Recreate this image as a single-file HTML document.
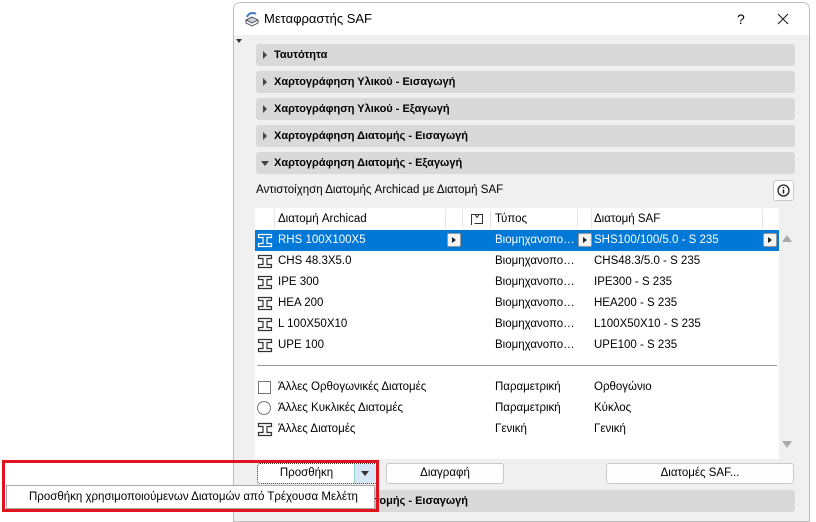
<!DOCTYPE html>
<html><head><meta charset="utf-8"><style>
*{box-sizing:border-box;margin:0;padding:0}
body{width:816px;height:514px;background:#fff;position:relative;overflow:hidden;font-family:"Liberation Sans","DejaVu Sans",sans-serif;font-size:11px;color:#000}
.a{position:absolute}
.dlg{left:233px;top:2px;width:577px;height:520px;background:#f0f0f0;border:1px solid #bdbdbd;border-radius:7px 7px 0 0;overflow:hidden}
.title{left:0;top:0;width:100%;height:32px;background:#fff}
.bar{left:22px;width:539px;height:22px;background:#d9d9d9;border-radius:3px;font-weight:bold;font-size:11px;line-height:22px;padding-left:18px}
.bar:before{content:"";position:absolute;left:7px;top:7px;border-left:4px solid #444;border-top:4px solid transparent;border-bottom:4px solid transparent}
.bar.open:before{left:5px;top:9px;border-top:5px solid #444;border-left:4px solid transparent;border-right:4px solid transparent;border-bottom:0}
.tbl{left:21px;top:205px;width:524px;height:251px;background:#fff;font-size:11.5px}
.row{position:absolute;left:0;width:524px;height:21px;line-height:21px}
.row span{position:absolute}
.sel{background:#0078d7;color:#fff}
.ib{position:absolute;width:14px;height:14px;top:3px;background:#f4f4f4;border:1px solid #999;border-radius:2px}
.ib:after{content:"";position:absolute;left:4px;top:3px;border-left:4px solid #222;border-top:3px solid transparent;border-bottom:3px solid transparent}
.btn{position:absolute;height:21px;background:#fdfdfd;border:1px solid #c8c8c8;border-radius:3px;text-align:center;line-height:19px;font-size:11.5px}
.ibeam{position:absolute;left:2px;top:3px}
</style></head><body>
<svg width="0" height="0" style="position:absolute"><symbol id="ib" viewBox="0 0 16 15"><path d="M1.5 1.5h13v3h-4.5v6h4.5v3h-13v-3h4.5v-6h-4.5z" fill="none" stroke="currentColor" stroke-width="1.2"/></symbol></svg>
<div class="a dlg">
 <div class="a title">
  <svg class="a" style="left:10px;top:8px" width="16" height="16" viewBox="0 0 16 16"><path d="M2 9l6-3 6 3-6 3z" fill="#c9d3df" stroke="#555"/><path d="M2 9v3l6 3 6-3V9" fill="none" stroke="#555"/><path d="M3 6a6 6 0 0 1 9-3" stroke="#3a78c9" stroke-width="2" fill="none"/></svg>
  <span class="a" style="left:30px;top:8px;font-size:13px">Μεταφραστής SAF</span>
  <span class="a" style="left:503px;top:8px;font-size:14px">?</span>
  <svg class="a" style="left:543px;top:10px" width="12" height="12"><path d="M1 1l10 10M11 1L1 11" stroke="#222" stroke-width="1.1"/></svg>
 </div>
 <div class="a" style="left:2px;top:36px;border-top:4px solid #333;border-left:3px solid transparent;border-right:3px solid transparent"></div>
 <div class="a bar" style="top:41px">Ταυτότητα</div>
 <div class="a bar" style="top:68px">Χαρτογράφηση Υλικού - Εισαγωγή</div>
 <div class="a bar" style="top:95px">Χαρτογράφηση Υλικού - Εξαγωγή</div>
 <div class="a bar" style="top:122px">Χαρτογράφηση Διατομής - Εισαγωγή</div>
 <div class="a bar open" style="top:149px">Χαρτογράφηση Διατομής - Εξαγωγή</div>
 <span class="a" style="left:22px;top:181px;font-size:11.5px">Αντιστοίχηση Διατομής Archicad με Διατομή SAF</span>
 <div class="a" style="left:539px;top:177px;width:21px;height:21px;border:1px solid #c8c8c8;border-radius:3px;background:#fdfdfd"><svg width="19" height="19" viewBox="0 0 19 19"><circle cx="9.5" cy="9.5" r="5.5" fill="none" stroke="#222" stroke-width="1.3"/><path d="M9.5 8.5v4M9.5 6v1.2" stroke="#222" stroke-width="1.5"/></svg></div>
 <div class="a tbl">
  <div class="row" style="top:1px;height:20px;line-height:20px">
   <span style="left:19px;top:0;width:1px;height:20px;background:#e5e5e5"></span>
   <span style="left:23px">Διατομή Archicad</span>
   <span style="left:190px;top:0;width:1px;height:20px;background:#e5e5e5"></span>
   <span style="left:207px;top:0;width:1px;height:20px;background:#e5e5e5"></span>
   <svg style="position:absolute;left:215px;top:4px" width="14" height="13"><path d="M1.5 12V1.5h11v9h-8M5 1.5l2 3 2-3" fill="none" stroke="#333"/></svg>
   <span style="left:235px;top:0;width:1px;height:20px;background:#e5e5e5"></span>
   <span style="left:240px">Τύπος</span>
   <span style="left:322px;top:0;width:1px;height:20px;background:#e5e5e5"></span>
   <span style="left:336px;top:0;width:1px;height:20px;background:#e5e5e5"></span>
   <span style="left:339px">Διατομή SAF</span>
   <span style="left:507px;top:0;width:1px;height:20px;background:#e5e5e5"></span>
  </div>
  <div class="row sel" style="top:22px"><svg class="ibeam" width="16" height="15" style="color:#fff"><use href="#ib"/></svg><span style="left:23px">RHS 100X100X5</span><span class="ib" style="left:192px"></span><span style="left:240px">Βιομηχανοπο…</span><span class="ib" style="left:323px"></span><span style="left:339px">SHS100/100/5.0 - S 235</span><span class="ib" style="left:508px"></span></div>
  <div class="row" style="top:43px"><svg class="ibeam" width="16" height="15" style="color:#333"><use href="#ib"/></svg><span style="left:23px">CHS 48.3X5.0</span><span style="left:240px">Βιομηχανοπο…</span><span style="left:339px">CHS48.3/5.0 - S 235</span></div>
  <div class="row" style="top:64px"><svg class="ibeam" width="16" height="15" style="color:#333"><use href="#ib"/></svg><span style="left:23px">IPE 300</span><span style="left:240px">Βιομηχανοπο…</span><span style="left:339px">IPE300 - S 235</span></div>
  <div class="row" style="top:85px"><svg class="ibeam" width="16" height="15" style="color:#333"><use href="#ib"/></svg><span style="left:23px">HEA 200</span><span style="left:240px">Βιομηχανοπο…</span><span style="left:339px">HEA200 - S 235</span></div>
  <div class="row" style="top:106px"><svg class="ibeam" width="16" height="15" style="color:#333"><use href="#ib"/></svg><span style="left:23px">L 100X50X10</span><span style="left:240px">Βιομηχανοπο…</span><span style="left:339px">L100X50X10 - S 235</span></div>
  <div class="row" style="top:127px"><svg class="ibeam" width="16" height="15" style="color:#333"><use href="#ib"/></svg><span style="left:23px">UPE 100</span><span style="left:240px">Βιομηχανοπο…</span><span style="left:339px">UPE100 - S 235</span></div>
  <div style="position:absolute;left:2px;top:157px;width:520px;height:1px;background:#999"></div>
  <div class="row" style="top:169px"><span style="left:3px;top:4px;width:13px;height:13px;border:1px solid #777"></span><span style="left:23px">Άλλες Ορθογωνικές Διατομές</span><span style="left:240px">Παραμετρική</span><span style="left:339px">Ορθογώνιο</span></div>
  <div class="row" style="top:190px"><span style="left:2px;top:3px;width:14px;height:14px;border:1px solid #777;border-radius:50%"></span><span style="left:23px">Άλλες Κυκλικές Διατομές</span><span style="left:240px">Παραμετρική</span><span style="left:339px">Κύκλος</span></div>
  <div class="row" style="top:211px"><svg class="ibeam" width="16" height="15" style="color:#333"><use href="#ib"/></svg><span style="left:23px">Άλλες Διατομές</span><span style="left:240px">Γενική</span><span style="left:339px">Γενική</span></div>
 </div>
 <div class="a" style="left:548px;top:232px;border-bottom:7px solid #aaa;border-left:5px solid transparent;border-right:5px solid transparent"></div>
 <div class="a" style="left:548px;top:438px;border-top:7px solid #aaa;border-left:5px solid transparent;border-right:5px solid transparent"></div>
 <div class="btn" style="left:23px;top:460px;width:121px;border:1px dotted #333;background:#fff"><span style="position:absolute;left:0;width:97px">Προσθήκη</span><span style="position:absolute;left:96px;top:0;width:23px;height:19px;background:#d6e8f8;border-left:1px solid #9cc"></span><span style="position:absolute;left:103px;top:7px;border-top:5px solid #333;border-left:4px solid transparent;border-right:4px solid transparent"></span></div>
 <div class="btn" style="left:152px;top:460px;width:118px">Διαγραφή</div>
 <div class="btn" style="left:372px;top:460px;width:188px">Διατομές SAF...</div>
 <div class="a bar" style="top:487px">Χαρτογράφηση Διατομής - Εισαγωγή</div>
</div>
<div class="a" style="left:6px;top:485px;width:369px;height:24px;background:#fff;border:1px solid #aaa;box-shadow:1px 1px 2px rgba(0,0,0,.2);line-height:22px;padding-left:22px;font-size:11.5px">Προσθήκη χρησιμοποιούμενων Διατομών από Τρέχουσα Μελέτη</div>
<div class="a" style="left:2px;top:460px;width:377px;height:52px;border:3px solid #e0141e"></div>
</body></html>
